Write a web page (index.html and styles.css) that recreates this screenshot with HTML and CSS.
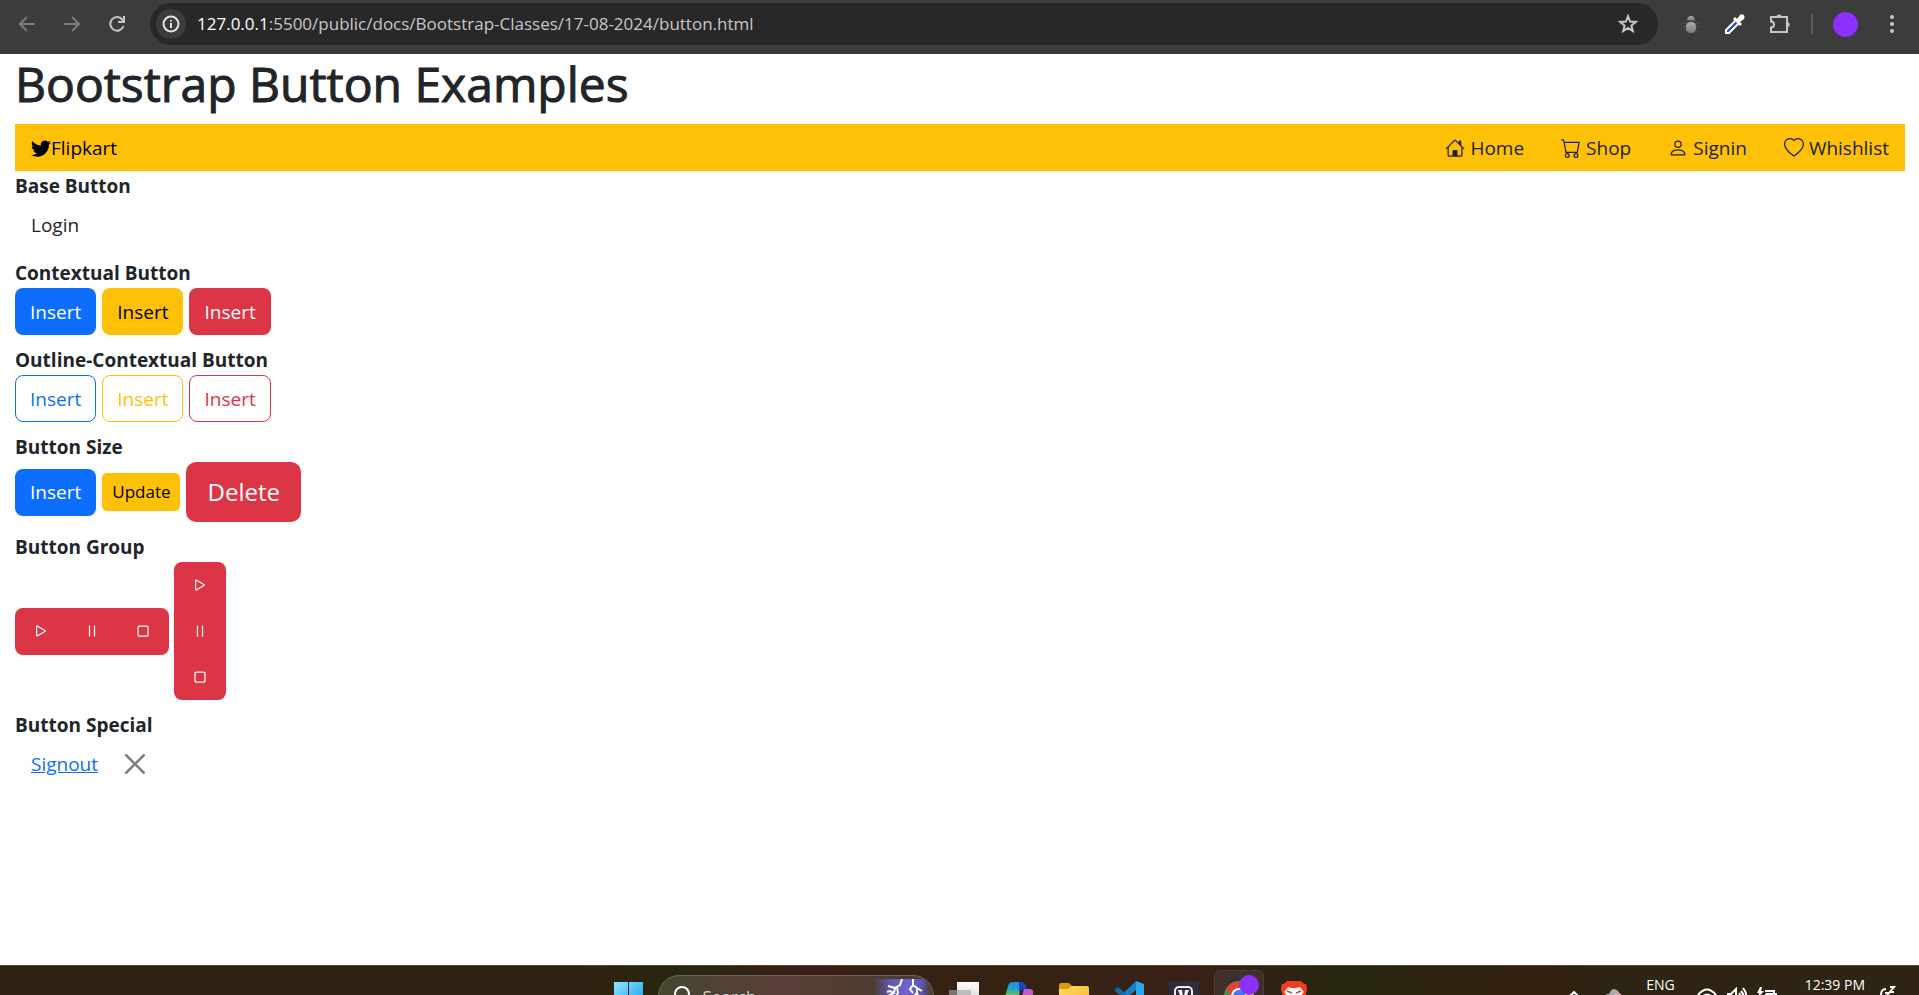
FILE: index.html
```html
<!DOCTYPE html>
<html lang="en">
<head>
<meta charset="utf-8">
<title>Bootstrap Button Examples</title>
<link rel="stylesheet" href="styles.css">
</head>
<body>
<svg class="defs" aria-hidden="true">
  <defs>
    <linearGradient id="win" x1="0" y1="0" x2="1" y2="1"><stop offset="0" stop-color="#8de3ff"/><stop offset="1" stop-color="#0a9df0"/></linearGradient>
    <linearGradient id="cop" x1="0" y1="0" x2="0" y2="1"><stop offset="0" stop-color="#1c8be8"/><stop offset=".35" stop-color="#27a8c0"/><stop offset=".7" stop-color="#8cc63f"/><stop offset="1" stop-color="#e6d53a"/></linearGradient>
    <linearGradient id="cop2" x1="0" y1="0" x2="0" y2="1"><stop offset="0" stop-color="#b35be0"/><stop offset="1" stop-color="#f0608a"/></linearGradient>
    <linearGradient id="fold" x1="0" y1="0" x2="1" y2="1"><stop offset="0" stop-color="#ffdb6b"/><stop offset="1" stop-color="#f9b721"/></linearGradient>
    <linearGradient id="tv" x1="0" y1="0" x2="0" y2="1"><stop offset="0" stop-color="#fff"/><stop offset="1" stop-color="#d0d0d0"/></linearGradient>
    <linearGradient id="bugg" x1="0" y1="0" x2="0" y2="1"><stop offset="0" stop-color="#b0b0b0"/><stop offset="1" stop-color="#777"/></linearGradient>
    <linearGradient id="storm"><stop offset="0" stop-color="#5d54a8" stop-opacity="0"/><stop offset=".3" stop-color="#6158ac"/><stop offset=".6" stop-color="#7064d0"/><stop offset=".85" stop-color="#5d54a8"/><stop offset="1" stop-color="#5d54a8" stop-opacity="0"/></linearGradient>
    <symbol id="play" viewBox="0 0 16 16"><path d="M10.804 8 5 4.633v6.734zm.792-.696a.802.802 0 0 1 0 1.392l-6.363 3.692C4.713 12.69 4 12.345 4 11.692V4.308c0-.653.713-.998 1.233-.696z"/></symbol>
    <symbol id="pause" viewBox="0 0 16 16"><path d="M6 3.5a.5.5 0 0 1 .5.5v8a.5.5 0 0 1-1 0V4a.5.5 0 0 1 .5-.5m4 0a.5.5 0 0 1 .5.5v8a.5.5 0 0 1-1 0V4a.5.5 0 0 1 .5-.5"/></symbol>
    <symbol id="stop" viewBox="0 0 16 16"><path d="M3.5 5A1.5 1.5 0 0 1 5 3.5h6A1.5 1.5 0 0 1 12.5 5v6a1.5 1.5 0 0 1-1.5 1.5H5A1.5 1.5 0 0 1 3.5 11zM5 4.5a.5.5 0 0 0-.5.5v6a.5.5 0 0 0 .5.5h6a.5.5 0 0 0 .5-.5V5a.5.5 0 0 0-.5-.5z"/></symbol>
  </defs>
</svg>

<header class="toolbar">
  <nav class="history" aria-label="Browser history">
    <button class="tool dim" aria-label="Back"><svg viewBox="0 0 20 20"><path d="M18 10H3M10 3l-7 7 7 7"/></svg></button>
    <button class="tool dim" aria-label="Forward"><svg viewBox="0 0 20 20"><path d="M2 10h15M10 3l7 7-7 7"/></svg></button>
    <button class="tool" aria-label="Reload"><svg viewBox="0 0 20 20"><path d="M16.500 12A6.800 6.800 0 1 1 15.500 5.800L17 7.500M17 2V8H11"/></svg></button>
  </nav>
  <div class="address">
    <button class="site-info" aria-label="Site information"><svg viewBox="0 0 20 20"><circle cx="10" cy="10" r="7.500"/><path d="M10 9v5M10 6v1.500"/></svg></button>
    <p class="url"><span class="host">127.0.0.1</span>:5500/public/docs/Bootstrap-Classes/17-08-2024/button.html</p>
    <button class="tool star" aria-label="Bookmark"><svg viewBox="0 0 20 20"><path d="m10 2.200 2.100 5.300 5.700.4-4.400 3.600 1.400 5.600L10 14l-4.800 3.100 1.400-5.600L2.200 7.900l5.700-.4z"/></svg></button>
  </div>
  <div class="extensions">
    <button class="tool" aria-label="Debugger"><svg viewBox="0 0 20 20"><g stroke="none" fill="url(#bugg)"><path d="M6 6.500a4 4.500 0 0 1 8 0z"/><rect x="5" y="8" width="10" height="11" rx="4.500"/></g><path class="legs" d="M2 9h3M2 13h3M3 17l2-1M15 9h3M15 13h3M15 16l2 1"/></svg></button>
    <button class="tool" aria-label="Color picker"><svg viewBox="0 0 20 20"><path stroke="#fff" fill="#2b48c0" d="M1 19v-3L11 6l3 3L4 19z"/><path stroke="none" fill="#fff" d="m8 5 2-2 2 2 3-4c2-2 6 1 4 4l-4 3 2 2-2 2z"/></svg></button>
    <button class="tool puzzle" aria-label="Extensions"><svg viewBox="0 0 22 22"><path d="M2 4h16v15H2v-4.500a3 3 0 0 0 0-6z"/><path stroke="none" fill="#c7c7c7" d="M7.500 4a2.600 2.600 0 0 1 5.200 0zM18 9a2.600 2.600 0 0 1 0 5.200z"/></svg></button>
    <span class="divider"></span>
    <button class="avatar" aria-label="Profile"></button>
    <button class="tool" aria-label="Menu"><svg viewBox="0 0 20 20"><g stroke="none" fill="#c7c7c7"><circle cx="10" cy="3" r="2"/><circle cx="10" cy="10" r="2"/><circle cx="10" cy="17" r="2"/></g></svg></button>
  </div>
</header>

<main class="page">
  <h1>Bootstrap Button Examples</h1>
  <nav class="shopbar">
    <button class="btn brand"><svg class="icon" viewBox="0 0 16 16"><path d="M5.026 15c6.038 0 9.341-5.003 9.341-9.334q.002-.211-.006-.422A6.700 6.700 0 0 0 16 3.542a6.700 6.700 0 0 1-1.889.518 3.300 3.300 0 0 0 1.447-1.817 6.500 6.500 0 0 1-2.087.793A3.286 3.286 0 0 0 7.875 6.030a9.320 9.320 0 0 1-6.767-3.429 3.290 3.290 0 0 0 1.018 4.382A3.300 3.300 0 0 1 .64 6.575v.045a3.290 3.290 0 0 0 2.632 3.218 3.200 3.200 0 0 1-.865.115 3 3 0 0 1-.614-.057 3.280 3.280 0 0 0 3.067 2.277A6.600 6.600 0 0 1 .78 13.580a6 6 0 0 1-.78-.045A9.340 9.340 0 0 0 5.026 15"/></svg>Flipkart</button>
    <div class="row">
      <button class="btn link"><svg class="icon" viewBox="0 0 16 16"><path d="M8.707 1.500a1 1 0 0 0-1.414 0L.646 8.146a.5.5 0 0 0 .708.708L2 8.207V13.500A1.500 1.500 0 0 0 3.500 15h9a1.500 1.500 0 0 0 1.500-1.500V8.207l.646.647a.5.5 0 0 0 .708-.708L13 5.793V2.500a.5.5 0 0 0-.5-.5h-1a.5.5 0 0 0-.5.5v1.293zM13 7.207V13.500a.5.5 0 0 1-.5.5H10v-4a.5.5 0 0 0-.5-.5h-3a.5.5 0 0 0-.5.5v4H3.500a.5.5 0 0 1-.5-.5V7.207l5-5z"/></svg>Home</button>
      <button class="btn link"><svg class="icon" viewBox="0 0 16 16"><path d="M0 1.500A.5.5 0 0 1 .5 1H2a.5.5 0 0 1 .485.379L2.890 3H14.500a.5.5 0 0 1 .491.592l-1.500 8A.5.5 0 0 1 13 12H4a.5.5 0 0 1-.491-.408L2.010 3.607 1.610 2H.5a.5.5 0 0 1-.5-.5M3.102 4l1.313 7h8.170l1.313-7zM5 12a2 2 0 1 0 0 4 2 2 0 0 0 0-4m7 0a2 2 0 1 0 0 4 2 2 0 0 0 0-4m-7 1a1 1 0 1 1 0 2 1 1 0 0 1 0-2m7 0a1 1 0 1 1 0 2 1 1 0 0 1 0-2"/></svg>Shop</button>
      <button class="btn link"><svg class="icon" viewBox="0 0 16 16"><path d="M8 8a3 3 0 1 0 0-6 3 3 0 0 0 0 6m2-3a2 2 0 1 1-4 0 2 2 0 0 1 4 0m4 8c0 1-1 1-1 1H3s-1 0-1-1 1-4 6-4 6 3 6 4m-1-.004c-.001-.246-.154-.986-.832-1.664C11.516 10.680 10.289 10 8 10s-3.516.68-4.168 1.332c-.678.678-.83 1.418-.832 1.664z"/></svg>Signin</button>
      <button class="btn link"><svg class="icon" viewBox="0 0 16 16"><path d="m8 2.748-.717-.737C5.600.281 2.514.878 1.400 3.053c-.523 1.023-.641 2.500.314 4.385.92 1.815 2.834 3.989 6.286 6.357 3.452-2.368 5.365-4.542 6.286-6.357.955-1.886.838-3.362.314-4.385C13.486.878 10.400.28 8.717 2.010zM8 15C-7.333 4.868 3.279-3.040 7.824 1.143q.09.083.176.171a3 3 0 0 1 .176-.17C12.720-3.042 23.333 4.867 8 15"/></svg>Whishlist</button>
    </div>
  </nav>

  <dl>
    <dt>Base Button</dt>
    <dd><button class="btn">Login</button></dd>
    <dt>Contextual Button</dt>
    <dd><button class="btn primary">Insert</button><button class="btn warning">Insert</button><button class="btn danger">Insert</button></dd>
    <dt>Outline-Contextual Button</dt>
    <dd><button class="btn outline-primary">Insert</button><button class="btn outline-warning">Insert</button><button class="btn outline-danger">Insert</button></dd>
    <dt>Button Size</dt>
    <dd><button class="btn primary">Insert</button><button class="btn warning small">Update</button><button class="btn danger large">Delete</button></dd>
    <dt>Button Group</dt>
    <dd class="groups">
      <div class="group">
        <button class="btn danger" aria-label="Play"><svg class="icon"><use href="#play"/></svg></button>
        <button class="btn danger" aria-label="Pause"><svg class="icon"><use href="#pause"/></svg></button>
        <button class="btn danger" aria-label="Stop"><svg class="icon"><use href="#stop"/></svg></button>
      </div>
      <div class="group vertical">
        <button class="btn danger" aria-label="Play"><svg class="icon"><use href="#play"/></svg></button>
        <button class="btn danger" aria-label="Pause"><svg class="icon"><use href="#pause"/></svg></button>
        <button class="btn danger" aria-label="Stop"><svg class="icon"><use href="#stop"/></svg></button>
      </div>
    </dd>
    <dt>Button Special</dt>
    <dd><a class="btn signout" href="#">Signout</a><button class="close" aria-label="Close"><svg viewBox="0 0 16 16"><path d="M.293.293a1 1 0 0 1 1.414 0L8 6.586 14.293.293a1 1 0 1 1 1.414 1.414L9.414 8l6.293 6.293a1 1 0 0 1-1.414 1.414L8 9.414l-6.293 6.293a1 1 0 0 1-1.414-1.414L6.586 8 .293 1.707a1 1 0 0 1 0-1.414"/></svg></button></dd>
  </dl>
</main>

<footer class="taskbar">
  <div class="apps">
    <button class="app" aria-label="Start"><svg viewBox="0 0 30 30"><path fill="url(#win)" d="M1 1h14v14H1zM16 1h14v14H16zM1 16h14v14H1zM16 16h14v14H16z"/></svg></button>
    <label class="search">
      <svg class="lens" viewBox="0 0 20 20"><circle cx="9" cy="9" r="7"/><path d="m14 14 5 5"/></svg>
      <input type="text" placeholder="Search" aria-label="Search">
      <svg class="art" viewBox="0 0 66 36"><path d="M6 0h58v36H6z" fill="url(#storm)" stroke="none"/><path d="M35 0l-2 6-5 3-1 5-6 3M28 9l-7-2M27 14l-4-2-3 1M30 8l1 6-3 4M46 0v6l4 3v6l4 4M50 9l5 3M46 6l-3 4 3 4M50 14l-3 3"/></svg>
    </label>
    <button class="app" aria-label="Task view"><svg viewBox="0 0 30 30"><path fill="url(#tv)" d="M8 1h22v22H8z"/><path fill="#909090" fill-opacity=".75" d="M0 9h22v20H0z"/><path fill="#bdbdbd" d="M8 9h14v14H8z"/></svg></button>
    <button class="app" aria-label="Copilot"><svg viewBox="0 0 30 30"><path fill="url(#cop)" d="M9 1h9l-5 22H3q-4-2-2-7L4 5q1-4 5-4"/><path fill="#1b42c4" d="M15 1h2q4 0 5 4l1 4h-5q-3 0-3 3z"/><path fill="url(#cop2)" d="M20 8h6q4 0 3 5l-4 12q-1 4-5 4h-6z"/></svg></button>
    <button class="app" aria-label="File Explorer"><svg viewBox="0 0 30 30"><path fill="#dc9a08" d="M0 9V4q0-2 2-2h8l3 3h15v4z"/><path fill="url(#fold)" d="M0 8h9l4-3h15q2 0 2 2v21H0z"/></svg></button>
    <button class="app" aria-label="Visual Studio Code"><svg viewBox="0 0 30 30"><path fill="#1681c8" d="M22 0v9L4 24l-4-3z"/><path fill="#0b6bb0" d="m0 9 4-3 18 15v9z"/><path fill="#2aa8ef" d="m22 0 8 3v24l-8 3z"/></svg></button>
    <button class="app" aria-label="Notes"><svg viewBox="0 0 30 30"><path fill="#2b2d3a" d="M0 0h30v30H0z"/><rect x="6" y="6" width="17" height="20" rx="4" fill="none" stroke="#eee" stroke-width="2"/><path d="m9 9 4 0 1 7-3-2zM20 9l-4 0-1 7 3-2z" fill="#fff"/></svg></button>
    <button class="app active" aria-label="Chrome"><svg viewBox="0 0 30 30"><circle cx="15" cy="15" r="15" fill="#2f9e4c"/><path fill="#e24234" d="M2 8a15 15 0 0 1 26 0H15l-6 10z"/><path fill="#fcc934" d="M28 8H15l6 12-6 10A15 15 0 0 0 28 8"/><circle cx="15" cy="15" r="7" fill="#3b7ded" stroke="#fff" stroke-width="2"/></svg><span class="badge"></span></button>
    <button class="app" aria-label="Brave"><svg viewBox="0 0 30 30"><path fill="#f8391c" d="M8 0h14l3 3h2l1 5-1 5-3 11-9 6-9-6L3 13 2 8l1-5h2z"/><path fill="#fff" d="M9 6l4 1h4l4-1 4 5-3 4 1 4-4 1-4 4-4-4-4-1 1-4-3-4z"/><path fill="none" d="M8 10l5 2M22 10l-5 2M13 15l2 3 2-3" stroke="#f8391c" stroke-width="1.500"/></svg></button>
  </div>
  <div class="tray">
    <svg class="chevron" viewBox="0 0 12 8"><path d="m1 6 5-5 5 5"/></svg>
    <svg class="cloud" viewBox="0 0 22 18"><path fill="#aaa" stroke="none" d="M2 14q-2-8 5-8 4-9 10-2l2 6-6 6z"/><circle cx="16" cy="12" r="6" fill="#d82c2c" stroke="#ddd" stroke-width="1"/></svg>
    <span class="lang">ENG</span>
    <div class="status">
      <svg viewBox="0 0 20 20"><path d="M1 8q9-11 18 0M4 11q6-7 12 0M7 14q3-3 6 0"/></svg>
      <svg viewBox="0 0 20 20"><path d="M1 7h3l5-5v16l-5-5H1zM12 6q3 4 0 8M14 4q5 6 0 12M16 1q7 9 0 18"/></svg>
      <svg viewBox="0 0 20 20"><path d="M8 4h9v10H3V9M17 7h2v5h-2"/><path fill="#fff" stroke="none" d="M9 6h7v7H5zM3 0 0 6h2l-1 5 6-7H4l1-4z"/></svg>
    </div>
    <div class="clock">
      <span class="time">12:39 PM</span>
      <svg class="bell" viewBox="0 0 18 20"><path d="M8 3Q3 3 3 9v5l-2 3h14M7 7h4l-4 5h4M12 1h4l-4 5h4"/></svg>
    </div>
  </div>
</footer>
</body>
</html>
```
FILE: styles.css
```css
* { box-sizing: border-box; }

body {
  margin: 0;
  min-height: 100vh;
  display: flex;
  flex-direction: column;
  background: #fff;
  color: #212529;
  font-family: "Open Sans", "Noto Sans", sans-serif;
  font-size: 19px;
  line-height: 30px;
}

button {
  font: inherit;
  color: inherit;
  background: none;
  border: 0;
  padding: 0;
}

svg { display: block; flex: none; }
.defs { position: absolute; width: 0; height: 0; }

/* Browser toolbar */
.toolbar {
  display: flex;
  align-items: center;
  height: 54px;
  padding: 0 17px 6px;
  background: #3c3c3c;
}
.history { display: flex; gap: 25px; padding-right: 23px; }
.tool { width: 20px; height: 20px; }
.tool svg {
  width: 20px;
  height: 20px;
  fill: none;
  stroke: #c7c7c7;
  stroke-width: 2;
}
.tool.dim svg { stroke: #7d7d7d; }
.tool .legs { stroke: #555; stroke-width: 1; }
.tool.puzzle, .tool.puzzle svg { width: 22px; height: 22px; }
.address {
  flex: 1;
  display: flex;
  align-items: center;
  height: 42px;
  padding: 0 20px 0 6px;
  border-radius: 21px;
  background: #282828;
}
.site-info {
  display: grid;
  place-items: center;
  width: 30px;
  height: 30px;
  border-radius: 50%;
  background: #3c3c3c;
}
.site-info svg { width: 20px; height: 20px; fill: none; stroke: #e3e3e3; stroke-width: 2; }
.url {
  flex: 1;
  margin: 0 0 0 11px;
  color: #c7c7c7;
  font-size: 17px;
}
.host { color: #fff; }
.extensions { display: flex; align-items: center; gap: 24px; padding-left: 23px; }
.divider { width: 2px; height: 20px; background: #5c5c5c; margin: 0 -4px; }
.avatar { width: 25px; height: 25px; border-radius: 50%; background: #8c30ff; }

/* Page content */
.page { flex: 1; padding: 0 14px 0 15px; }
h1 {
  margin: 0 0 10px;
  font-size: 48px;
  font-weight: 500;
  line-height: 60px;
  -webkit-text-stroke: 1px currentColor;
}
.shopbar { display: flex; justify-content: space-between; background: #ffc107; }
.row { display: flex; gap: 5px; }
dl { margin: 0; }
dt { font-weight: 700; }
dd {
  display: flex;
  align-items: center;
  gap: 6px;
  margin: 0 0 10px;
}
.groups { gap: 5px; }

.btn {
  display: inline-flex;
  align-items: center;
  justify-content: center;
  height: 47px;
  padding: 0 15px;
  border: 1px solid transparent;
  border-radius: 8px;
}
.icon { width: 20px; height: 20px; fill: currentColor; }
.brand { color: #000; }
.link { gap: 5px; }
.primary, .warning, .danger,
.outline-primary, .outline-warning, .outline-danger { padding: 0 14px; }
.primary { background: #0d6efd; color: #fff; }
.warning { background: #ffc107; color: #000; }
.danger { background: #dc3545; color: #fff; }
.outline-primary { border-color: #0d6efd; color: #0d6efd; }
.outline-warning { border-color: #ffc107; color: #ffc107; }
.outline-danger { border-color: #dc3545; color: #dc3545; }
.small { height: 38px; padding: 0 9px; border-radius: 5px; font-size: 17px; }
.large { height: 60px; padding: 0 20px; border-radius: 10px; font-size: 24px; }

.group { display: flex; border-radius: 8px; overflow: hidden; }
.group .btn { padding: 0 15px; border-radius: 0; margin-right: -1px; }
.group .btn:last-child { margin-right: 0; }
.group.vertical { flex-direction: column; }
.group.vertical .btn { margin: 0; height: 46px; }
.signout { color: #0d6efd; text-decoration: underline; }
.close { padding: 5px; }
.close svg { width: 20px; height: 20px; fill: #000; opacity: .5; }

/* Taskbar */
.taskbar {
  display: grid;
  grid-template-columns: 1fr auto 1fr;
  height: 30px;
  overflow: hidden;
  background: linear-gradient(90deg, #2c2313 0%, #2e2312 30%, #28260f 36%, #3a1d17 42%, #33230f 52%, #3a2018 62%, #26260f 70%, #33200f 80%, #2d2413 84%, #2d2413 100%);
  border-top: 1px solid #4b4638;
  color: #fff;
}
.apps { grid-column: 2; display: flex; gap: 5px; height: 60px; padding: 4px 0 0 2px; }
.app {
  position: relative;
  display: flex;
  justify-content: center;
  width: 50px;
  height: 50px;
  padding-top: 10px;
  border: 1px solid transparent;
  border-radius: 6px;
}
.app svg { width: 30px; height: 30px; }
.app.active { background: #3f2f2b; border-color: #4c3d38; }
.badge {
  position: absolute;
  top: 4px;
  right: 4px;
  width: 20px;
  height: 20px;
  border-radius: 50%;
  background: #8c30ff;
}
.search {
  display: flex;
  width: 276px;
  height: 42px;
  margin-top: 5px;
  padding-left: 14px;
  border: 1px solid #6c6556;
  border-radius: 21px;
  overflow: hidden;
  background: linear-gradient(90deg, #454630, #5a3f38 45%, #503c30 70%, #45402f);
}
.lens { width: 20px; height: 20px; margin-top: 9px; fill: none; stroke: #fff; stroke-width: 2; }
.search input {
  flex: 1;
  min-width: 0;
  height: 40px;
  padding: 0 0 0 10px;
  border: 0;
  background: none;
  color: #d4d0cc;
  font: 17px "Open Sans", sans-serif;
}
.search input::placeholder { color: #d4d0cc; }
.art { width: 66px; height: 36px; margin-top: 3px; fill: none; stroke: #fff; stroke-width: 2; }
.tray {
  display: flex;
  justify-content: flex-end;
  gap: 22px;
  padding-right: 23px;
  font-size: 14px;
  line-height: 20px;
}
.tray svg { fill: none; stroke: #fff; stroke-width: 2; }
.lang, .time { margin-top: 9px; }
.chevron { width: 12px; height: 8px; margin-top: 25px; }
.cloud { width: 22px; height: 18px; margin-top: 22px; }
.status { display: flex; gap: 10px; margin-top: 21px; }
.status svg { width: 20px; height: 20px; }
.clock { display: flex; gap: 13px; padding-left: 6px; }
.bell { width: 18px; height: 20px; margin-top: 20px; }
```
